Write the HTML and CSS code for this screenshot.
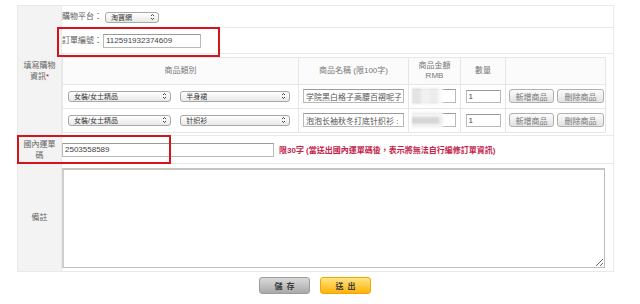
FILE: index.html
```html
<!DOCTYPE html>
<html lang="zh-Hant">
<head>
<meta charset="utf-8">
<title>填寫購物資訊</title>
<link rel="stylesheet" href="styles.css">
</head>
<body>
<div class="page">
  <table class="form">
    <colgroup><col class="c-label"><col class="c-field"></colgroup>
    <tr class="r-platform">
      <th rowspan="3" class="label label-shop">填寫購物<br>資訊<span class="req">*</span></th>
      <td class="field">購物平台：<span class="sel sel-platform"><select><option>淘寶網</option></select><svg class="arrow" viewBox="0 0 5 8" width="5" height="8"><path d="M1 3 L2.5 1.5 L4 3 M1 5 L2.5 6.5 L4 5" fill="none" stroke="#333" stroke-width="0.9"/></svg></span></td>
    </tr>
    <tr class="r-order">
      <td class="field">訂單編號：<input class="txt txt-order" value="112591932374609"></td>
    </tr>
    <tr class="r-items">
      <td class="field items-cell">
        <table class="items">
          <colgroup><col class="c-cat"><col class="c-name"><col class="c-price"><col class="c-qty"><col class="c-act"></colgroup>
          <tr class="ih">
            <th>商品類別</th>
            <th>商品名稱 (限100字)</th>
            <th>商品金額<br>RMB</th>
            <th>數量</th>
            <th></th>
          </tr>
          <tr class="ir">
            <td class="cat">
              <span class="sel sel-main"><select><option>女裝/女士精品</option></select><svg class="arrow" viewBox="0 0 5 8" width="5" height="8"><path d="M1 3 L2.5 1.5 L4 3 M1 5 L2.5 6.5 L4 5" fill="none" stroke="#333" stroke-width="0.9"/></svg></span>
              <span class="sel sel-sub"><select><option>半身裙</option></select><svg class="arrow" viewBox="0 0 5 8" width="5" height="8"><path d="M1 3 L2.5 1.5 L4 3 M1 5 L2.5 6.5 L4 5" fill="none" stroke="#333" stroke-width="0.9"/></svg></span>
            </td>
            <td class="ctr"><input class="txt txt-name" value="学院黑白格子高腰百褶呢子"></td>
            <td class="ctr"><span class="price"><input class="txt txt-price" value=""><span class="blur blur-a"></span></span></td>
            <td class="ctr"><input class="txt txt-qty" value="1"></td>
            <td class="acts"><button class="btn-sm">新增商品</button><button class="btn-sm">刪除商品</button></td>
          </tr>
          <tr class="ir">
            <td class="cat">
              <span class="sel sel-main"><select><option>女裝/女士精品</option></select><svg class="arrow" viewBox="0 0 5 8" width="5" height="8"><path d="M1 3 L2.5 1.5 L4 3 M1 5 L2.5 6.5 L4 5" fill="none" stroke="#333" stroke-width="0.9"/></svg></span>
              <span class="sel sel-sub"><select><option>针织衫</option></select><svg class="arrow" viewBox="0 0 5 8" width="5" height="8"><path d="M1 3 L2.5 1.5 L4 3 M1 5 L2.5 6.5 L4 5" fill="none" stroke="#333" stroke-width="0.9"/></svg></span>
            </td>
            <td class="ctr"><input class="txt txt-name" value="泡泡长袖秋冬打底针织衫 :"></td>
            <td class="ctr"><span class="price"><input class="txt txt-price" value=""><span class="blur blur-b"></span></span></td>
            <td class="ctr"><input class="txt txt-qty" value="1"></td>
            <td class="acts"><button class="btn-sm">新增商品</button><button class="btn-sm">刪除商品</button></td>
          </tr>
        </table>
      </td>
    </tr>
    <tr class="r-track">
      <th class="label">國內運單<br>碼</th>
      <td class="field"><input class="txt txt-track" value="2503558589"><span class="hint">限30字 (當送出國內運單碼後，表示將無法自行編修訂單資訊)</span></td>
    </tr>
    <tr class="r-note">
      <th class="label">備註</th>
      <td class="field note-cell"><textarea class="note"></textarea></td>
    </tr>
  </table>
  <div class="actions">
    <button class="btn btn-save">儲存</button>
    <button class="btn btn-send">送出</button>
  </div>
  <div class="mark mark-order"></div>
  <div class="mark mark-track"></div>
</div>
</body>
</html>
```

FILE: styles.css
```css
* { box-sizing: border-box; }
html, body { margin: 0; background: #fff; }
body {
  font-family: "Liberation Sans", "Noto Sans CJK TC", sans-serif;
  font-size: 8px;
  color: #555;
}
.page {
  position: relative;
  width: 596px;
  margin-left: 17px;
  padding-top: 5px;
}
.form {
  width: 596px;
  border-collapse: collapse;
  table-layout: fixed;
}
.c-label { width: 44px; }
.c-field { width: 552px; }
.form > tbody > tr > th,
.form > tbody > tr > td {
  border: 1px solid #e9e9e9;
  padding: 0;
}
.label {
  background: #f3f3f3;
  font-weight: normal;
  color: #666;
  line-height: 11px;
  text-align: center;
  vertical-align: middle;
}
.req { color: #d0021b; }
.field {
  padding: 0 4px 0 5px;
  text-align: left;
  vertical-align: middle;
  white-space: nowrap;
  color: #5a5a5a;
}
.r-platform { height: 22px; }
.r-order { height: 26px; }
.r-items { height: 82px; }
.r-track { height: 28px; }
.r-note { height: 108px; }

.sel {
  position: relative;
  display: inline-block;
  vertical-align: middle;
}
.sel select {
  appearance: none;
  -webkit-appearance: none;
  display: block;
  height: 11px;
  padding: 0 8px 0 5px;
  border: 1px solid #a8a8a8;
  border-radius: 3px;
  background: linear-gradient(#ffffff, #e9e9e9);
  font-family: "Liberation Sans", "Noto Sans CJK TC", sans-serif;
  font-size: 7px;
  line-height: 9px;
  color: #333;
}
.sel .arrow {
  position: absolute;
  right: 4px;
  top: 1.5px;
  pointer-events: none;
}
.sel-platform { margin-left: 3px; }
.sel-platform select { width: 54px; }
.sel-main select { width: 103px; }
.sel-sub select { width: 110px; }
.sel-sub { margin-left: 7px; }

.txt {
  height: 14px;
  border: 1px solid #b9b9b9;
  border-top-color: #9a9a9a;
  padding: 0 2px;
  font-family: "Liberation Sans", "Noto Sans CJK TC", sans-serif;
  font-size: 8px;
  color: #444;
  background: #fff;
  vertical-align: middle;
  margin: 0;
}
.txt-order { width: 98px; margin-left: 1px; }
.txt-track { width: 212px; margin-left: 0; }
.txt-name { width: 101px; color: #555; }
.txt-price { width: 43px; }
.txt-qty { width: 35px; height: 13px; }

.items-cell { padding: 3px 5px 4px 4px; }
.items {
  width: 543px;
  border-collapse: collapse;
  table-layout: fixed;
}
.items th, .items td {
  border: 1px solid #e6e6e6;
  padding: 0;
}
.c-cat { width: 236px; }
.c-name { width: 110px; }
.c-price { width: 52px; }
.c-qty { width: 45px; }
.c-act { width: 100px; }
.ih { height: 27px; }
.ih th {
  background: #fbfbfb;
  font-weight: normal;
  color: #777;
  line-height: 10px;
  text-align: center;
}
.ir { height: 24px; }
.cat { padding-left: 5px !important; white-space: nowrap; }
.ctr { text-align: center; }
.price {
  position: relative;
  display: inline-block;
  vertical-align: middle;
}
.price .txt { display: block; }
.blur {
  position: absolute;
  left: -1px;
  top: -1px;
  width: 31px;
  height: 16px;
  filter: blur(1px);
}
.blur-a {
  background:
    linear-gradient(90deg, #e4e4e4 0 9px, #f1f1f1 9px 18px, #ececec 18px 26px, #fafafa 26px);
}
.blur-b {
  background:
    linear-gradient(#f5f5f5 0 5px, transparent 5px 12px, #f5f5f5 12px),
    linear-gradient(90deg, #d6d6d6 0 27px, #eeeeee 27px);
}
.acts { padding-left: 3px !important; white-space: nowrap; }
.btn-sm {
  height: 14px;
  margin: 0 3px 0 0;
  padding: 0 4px;
  border: 1px solid #b0b0b0;
  border-radius: 3px;
  background: linear-gradient(#fcfcfc, #e2e2e2);
  font-family: "Liberation Sans", "Noto Sans CJK TC", sans-serif;
  font-size: 8px;
  color: #777;
  vertical-align: middle;
}
.btn-sm + .btn-sm { width: 47px; }
.btn-sm:first-child { width: 45px; }

.hint {
  margin-left: 5px;
  color: #c4234b;
  font-weight: bold;
  vertical-align: middle;
}
.note-cell { padding: 3px 5px 4px 4px; }
.note {
  display: block;
  width: 543px;
  height: 100px;
  border: 1px solid #bdbdbd;
  border-top: 2px solid #c4c4c4;
  border-left: 2px solid #cfcfcf;
  margin: 0;
  resize: both;
}

.actions {
  display: flex;
  justify-content: center;
  gap: 10px;
  margin-top: 5px;
}
.btn {
  width: 51px;
  height: 17px;
  border-radius: 3px;
  font-family: "Liberation Sans", "Noto Sans CJK TC", sans-serif;
  font-size: 8px;
  font-weight: bold;
  letter-spacing: 4px;
  text-indent: 4px;
  color: #3a3a3a;
  padding: 0;
}
.btn-save {
  border: 1px solid #9c9c9c;
  background: linear-gradient(#dadada, #a9a9a9);
}
.btn-send {
  border: 1px solid #f0a800;
  background: linear-gradient(#ffe583, #ffb20a);
}

.mark {
  position: absolute;
  border: 2px solid #d3141c;
  pointer-events: none;
}
.mark-order { left: 40px; top: 27px; width: 163px; height: 30px; }
.mark-track { left: 0; top: 135px; width: 154px; height: 29px; }
```
